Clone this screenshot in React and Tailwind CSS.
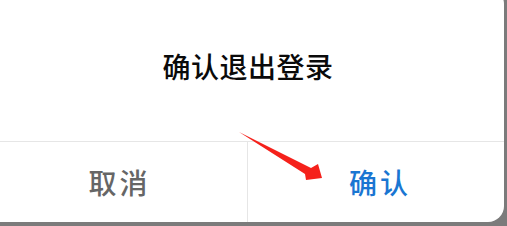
export default function App() {
  return (
    <div className="relative w-[507px] h-[226px] overflow-hidden bg-[#7b7b7b] font-['Noto_Sans_CJK_SC','Noto_Sans',sans-serif]">
      <div className="-ml-[8px] -mt-[12px] w-[512px] h-[234px] bg-white rounded-r-[16px] flex flex-col">
        <div className="h-[154px] flex items-center justify-center border-b border-[#e6e6e6]">
          <span className="text-[28px] leading-none font-medium text-[#0a0a0a] tracking-[0.5px] pt-[2px]">确认退出登录</span>
        </div>
        <div className="flex flex-1">
          <button className="w-[256px] flex items-center justify-center border-r border-[#e6e6e6] text-[28px] leading-none font-medium text-[#666666] tracking-[3px]">
            取消
          </button>
          <button className="flex-1 flex items-center justify-center pl-[8px] text-[28px] leading-none font-medium text-[#1a76d2] tracking-[3px]">
            确认
          </button>
        </div>
      </div>
      <svg className="absolute left-0 top-0" width="507" height="226" viewBox="0 0 507 226">
        <polygon points="239,132 311,168 318,164 322,178 306,180 305,174" fill="#f5211b" />
      </svg>
    </div>
  )
}
